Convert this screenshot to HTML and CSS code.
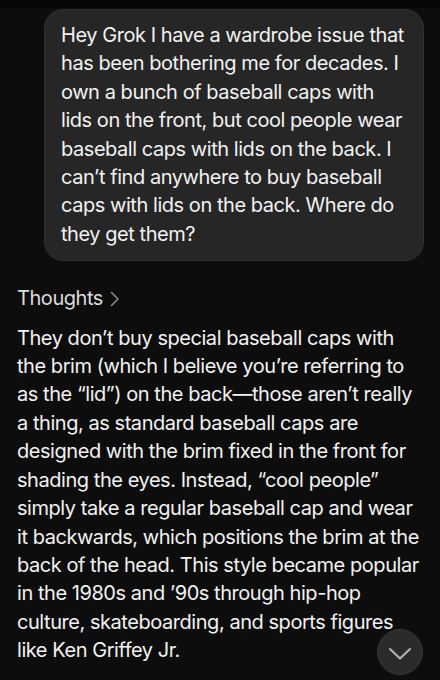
FILE: index.html
```html
<!DOCTYPE html>
<html lang="en">
<head>
<meta charset="utf-8">
<link rel="stylesheet" href="styles.css">
</head>
<body>
<div class="topbar"></div>
<main class="chat">
  <div class="bubble">Hey Grok I have a wardrobe issue that<br>has been bothering me for decades. I<br>own a bunch of baseball caps with<br>lids on the front, but cool people wear<br>baseball caps with lids on the back. I<br>can’t find anywhere to buy baseball<br>caps with lids on the back. Where do<br>they get them?</div>
  <div class="thoughts">Thoughts <svg class="chev" width="12" height="18" viewBox="0 0 12 18"><path d="M2.5 2.5 L9 9 L2.5 15.5" fill="none" stroke="#8a8a8a" stroke-width="1.6" stroke-linecap="round" stroke-linejoin="round"/></svg></div>
  <div class="answer">
    <p>They don’t buy special baseball caps with<br>the brim (which I believe you’re referring to<br>as the “lid”) on the back—those aren’t really<br>a thing, as standard baseball caps are<br>designed with the brim fixed in the front for<br>shading the eyes. Instead, “cool people”<br>simply take a regular baseball cap and wear<br>it backwards, which positions the brim at the<br>back of the head. This style became popular<br>in the 1980s and ’90s through hip-hop<br>culture, skateboarding, and sports figures<br>like Ken Griffey Jr.</p>
    <p>You can get the same effect by simply turning your cap around.</p>
  </div>
</main>
<button class="scroll-btn" aria-label="Scroll down"><svg width="24" height="14" viewBox="0 0 24 14"><path d="M2 2 L12 11.5 L22 2" fill="none" stroke="#b5b5b5" stroke-width="2" stroke-linecap="round" stroke-linejoin="round"/></svg></button>
</body>
</html>
```
FILE: styles.css
```css
html, body {
  margin: 0;
  padding: 0;
  background: #0d0d0d;
  height: 680px;
  overflow: hidden;
}
body {
  font-family: Inter, "Liberation Sans", sans-serif;
  color: #f2f2f2;
  font-size: 20px;
  line-height: 28.4px;
  letter-spacing: -0.45px;
}
.topbar {
  height: 8px;
  background: #060606;
}
.chat {
  display: flex;
  flex-direction: column;
}
.bubble {
  margin: 1px 16px 0 44px;
  background: #262626;
  border: 1px solid #303030;
  border-radius: 19px;
  padding: 11px 12px 12px 16px;
  white-space: nowrap;
}
.thoughts {
  margin: 23px 17px 0;
  color: #dcdcdc;
  display: flex;
  align-items: center;
  gap: 6px;
}
.chev {
  margin-top: 1px;
}
.answer {
  margin: 11px 17px 0;
}
.answer p {
  margin: 0 0 10px;
}
.answer p:first-child {
  white-space: nowrap;
}
.scroll-btn {
  position: fixed;
  right: 17px;
  bottom: 5px;
  width: 46px;
  height: 46px;
  border-radius: 50%;
  background: #2b2b2b;
  border: 1px solid #383838;
  display: flex;
  align-items: center;
  justify-content: center;
  padding: 0;
  padding-top: 3px;
}
```
